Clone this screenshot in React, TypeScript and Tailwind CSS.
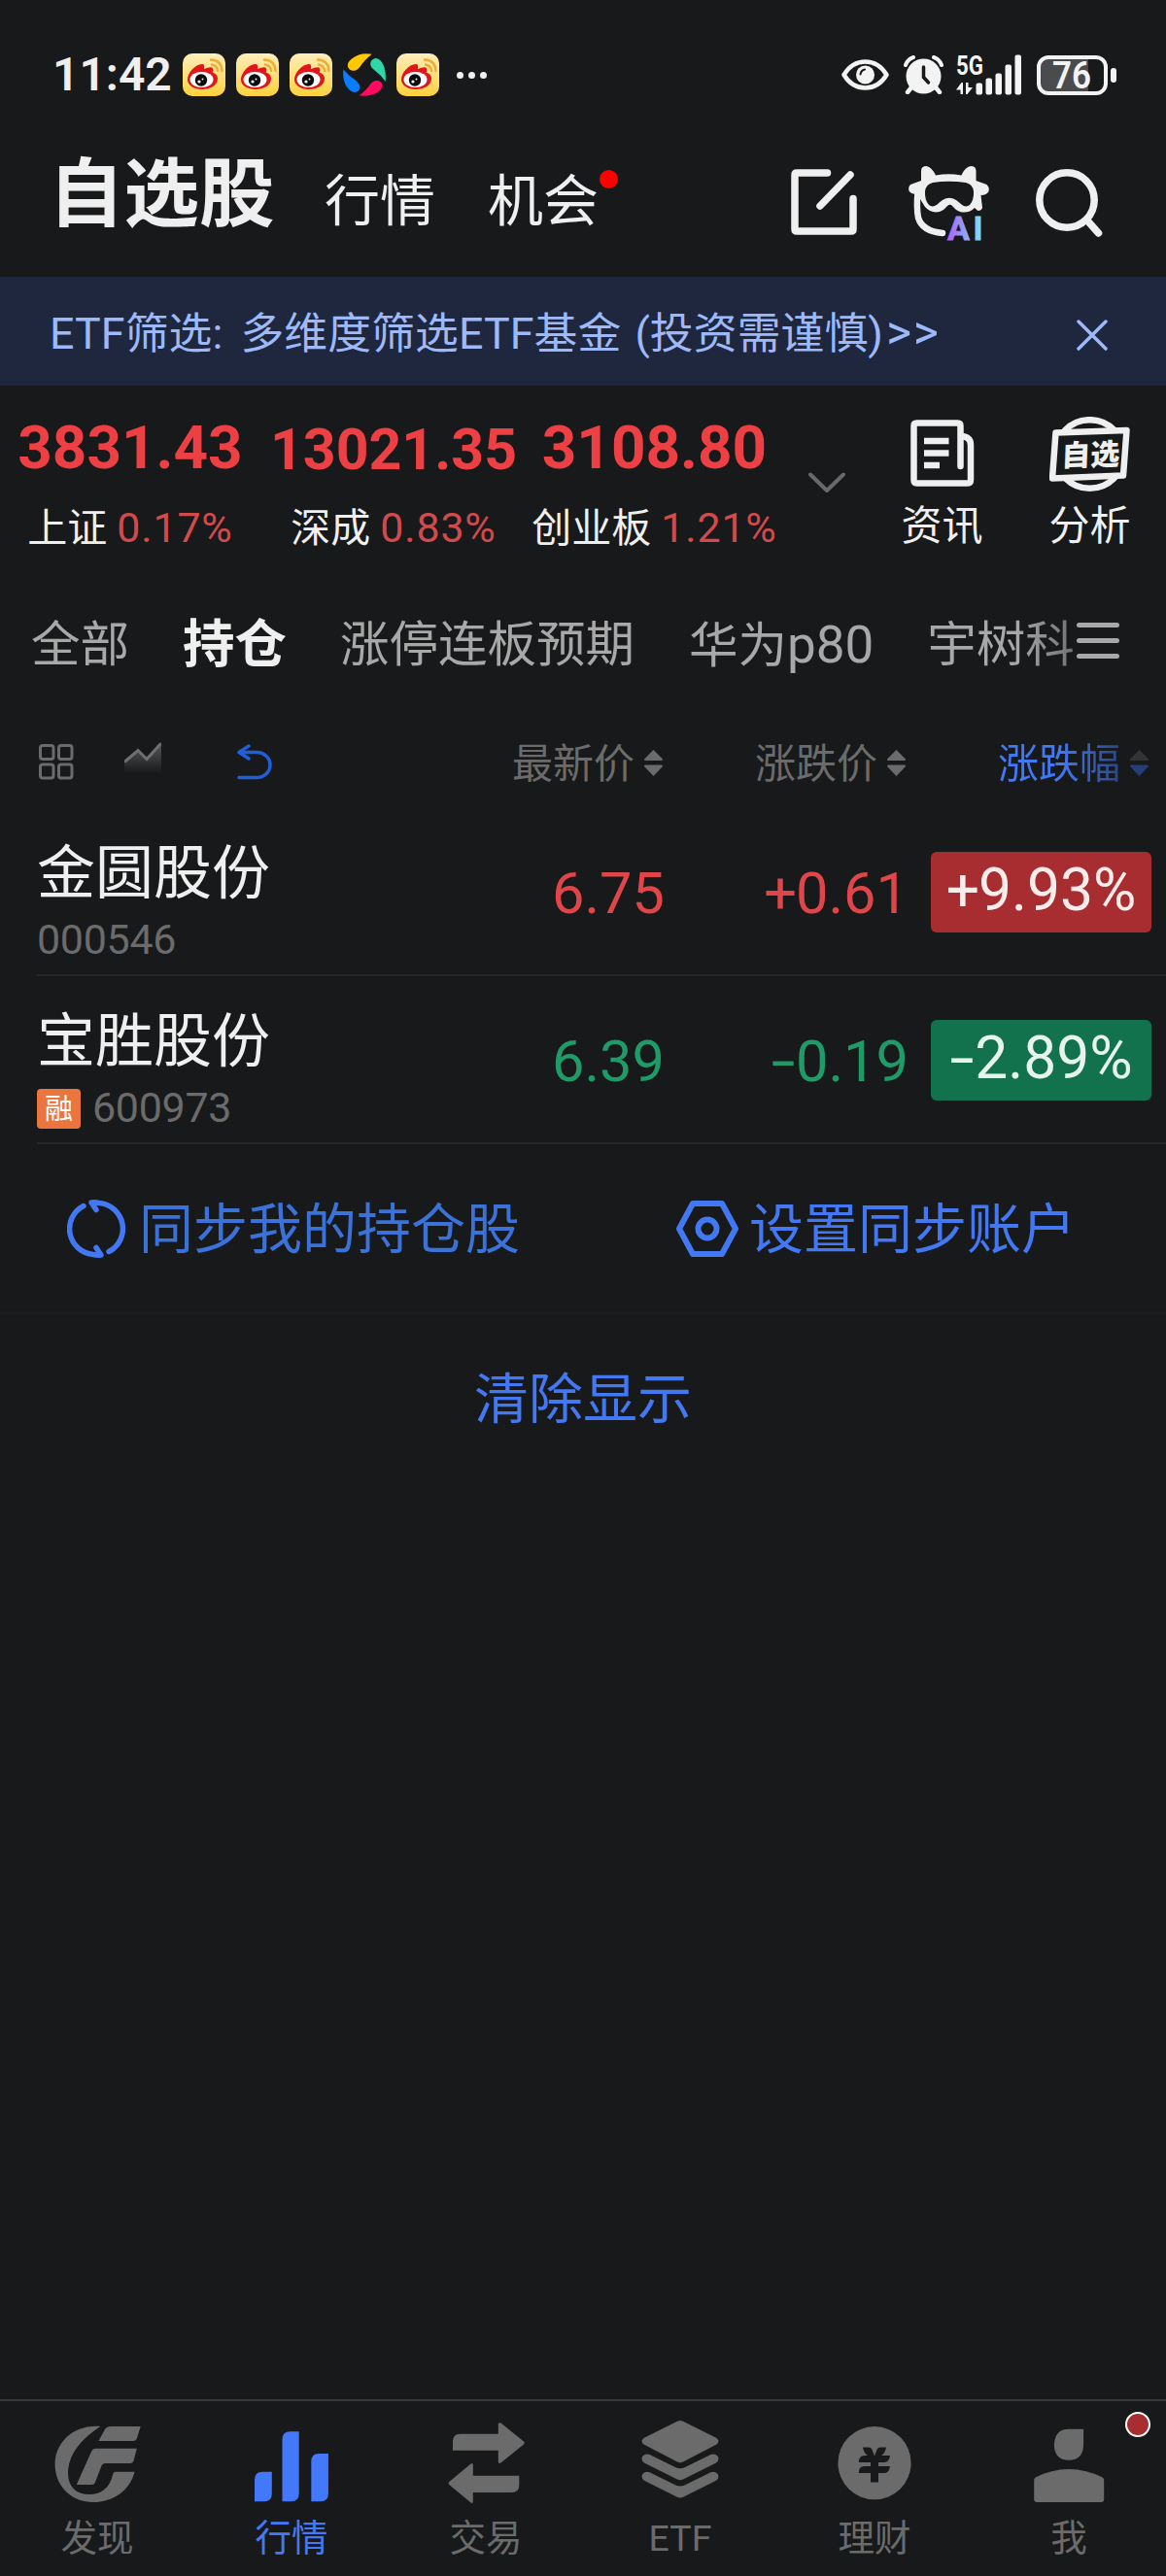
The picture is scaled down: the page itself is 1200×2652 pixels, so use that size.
import type { ReactNode } from "react"
import clsx from "clsx"

interface IndexQuote {
  value: string
  name: string
  change: string
  width: string
  small?: boolean
}

interface Stock {
  name: string
  code: string
  price: string
  change: string
  percent: string
  margin?: boolean
}

const indices: IndexQuote[] = [
  { value: "3831.43", name: "上证", change: "0.17%", width: "w-[268px]" },
  { value: "13021.35", name: "深成", change: "0.83%", width: "w-[274px]", small: true },
  { value: "3108.80", name: "创业板", change: "1.21%", width: "w-[263px]" },
]

const stocks: Stock[] = [
  { name: "金圆股份", code: "000546", price: "6.75", change: "+0.61", percent: "+9.93%" },
  { name: "宝胜股份", code: "600973", price: "6.39", change: "-0.19", percent: "-2.89%", margin: true },
]

export default function App() {
  return (
    <div className="w-[1200px] h-[2652px] flex flex-col overflow-hidden bg-[#17191a] text-[#efefef] whitespace-nowrap font-[Roboto,'Noto_Sans_CJK_SC',sans-serif]">
      <StatusBar />
      <Header />
      <Banner />
      <IndexStrip />
      <GroupTabs />
      <ColumnHeader />
      {stocks.map((stock) => (
        <StockRow key={stock.code} stock={stock} />
      ))}

      {/* Account sync actions */}
      <div className="h-[175px] shrink-0 flex items-center border-b-2 border-[#1b1b22] text-[56px] leading-[60px]">
        <div className="w-[627px] ml-[69px] flex items-center gap-[14px] text-[#3a72da]">
          <SyncIcon />
          <span className="mt-[3px]">同步我的持仓股</span>
        </div>
        <div className="flex items-center gap-[11px] text-[#4378f5]">
          <HexIcon />
          <span className="mt-[3px]">设置同步账户</span>
        </div>
      </div>
      <div className="mt-[58px] text-center text-[56px] leading-[60px] text-[#4378f5]">清除显示</div>

      <BottomNav />
    </div>
  )
}

function StatusBar() {
  return (
    <div className="h-[154px] shrink-0 flex items-center pl-[54px] pr-[51px]">
      <span className="w-[134px] text-[48px] leading-[56px] font-semibold">11:42</span>
      <div className="flex gap-[11px]">
        <WeiboIcon />
        <WeiboIcon />
        <WeiboIcon />
        <PinwheelIcon />
        <WeiboIcon />
      </div>
      <div className="ml-[18px] flex gap-[5px]">
        <i className="size-[7px] rounded-full bg-[#efefef]" />
        <i className="size-[7px] rounded-full bg-[#efefef]" />
        <i className="size-[7px] rounded-full bg-[#efefef]" />
      </div>

      <div className="ml-auto flex items-center">
        <svg width="49" height="32" viewBox="0 0 49 32" fill="none">
          <path d="M2.5 16C8 7 15 2.5 24.500 2.500S41 7 46.500 16C41 25 34 29.500 24.500 29.500S8 25 2.500 16Z" stroke="#f3f3f3" strokeWidth="4.500" strokeLinejoin="round" />
          <circle cx="24.500" cy="16" r="9.500" fill="#f3f3f3" />
          <path d="M19.500 15.500q.5-4 4.500-5" stroke="#17191a" strokeWidth="2" strokeLinecap="round" />
        </svg>
        <svg className="ml-[15px]" width="41" height="40" viewBox="0 0 41 40" fill="none">
          <circle cx="20.500" cy="21.500" r="18" fill="#f3f3f3" />
          <path d="M2 10Q4 4 10 2M39 10Q37 4 31 2" stroke="#f3f3f3" strokeWidth="4" strokeLinecap="round" />
          <path d="M8 33l-4 5M33 33l4 5" stroke="#f3f3f3" strokeWidth="4.500" strokeLinecap="round" />
          <path d="M20.500 12v10.500l5 5.500" stroke="#17191a" strokeWidth="3.500" strokeLinecap="round" />
        </svg>
        <svg className="ml-[13px] overflow-visible" width="68" height="42" viewBox="0 0 68 42" fill="#f3f3f3">
          <text x="0" y="20.500" fontSize="28" fontWeight="700" textLength="28" lengthAdjust="spacingAndGlyphs">5G</text>
          <path d="M0 36.500 5.500 29H7v12H4.500v-4.500ZM17 34l-5.500 7H10V29h2.500v5Z" />
          <rect x="20.500" y="29.500" width="6.500" height="12" rx="2" />
          <rect x="30.500" y="24.500" width="6.500" height="17" rx="2" />
          <rect x="40.500" y="19.500" width="6.500" height="22" rx="2" />
          <rect x="50.500" y="10.500" width="6.500" height="31" rx="2" />
          <rect x="60.500" y=".5" width="6.500" height="41" rx="2" />
        </svg>
        <svg className="ml-[15px] overflow-visible" width="82" height="41" viewBox="0 0 82 41">
          <path d="M12 3H53V38H12Q3 38 3 29V12Q3 3 12 3Z" fill="#4a4b4d" />
          <rect x="2" y="2" width="69" height="37" rx="10" fill="none" stroke="#f3f3f3" strokeWidth="4" />
          <rect x="76" y="13" width="6" height="15" rx="3" fill="#f3f3f3" />
          <text x="16" y="34" fontSize="38" fontWeight="600" textLength="40" lengthAdjust="spacingAndGlyphs" fill="#f3f3f3">76</text>
        </svg>
      </div>
    </div>
  )
}

function Header() {
  return (
    <div className="h-[131px] shrink-0 flex items-start pl-[50px] pr-[65px]">
      <div className="mt-[9px] flex items-baseline leading-[76px]">
        <h1 className="w-[232px] text-[77.5px] font-bold">自选股</h1>
        <span className="ml-[52px] text-[57px]">行情</span>
        <span className="relative ml-[54px] text-[57px]">
          机会
          <i className="absolute left-[115px] top-[5px] size-[19px] rounded-full bg-[#fe0000]" />
        </span>
      </div>
      <div className="ml-auto mt-[17px] flex items-start">
        <svg className="mt-[3px]" width="68" height="68" viewBox="0 0 68 68" fill="none" stroke="#efefef" strokeWidth="7.500" strokeLinecap="round" strokeLinejoin="round">
          <path d="M37.500 4H6Q4 4 4 6V62Q4 64 6 64H62Q64 64 64 62V30.500" />
          <path d="M61 6 30 38" />
        </svg>
        <RobotIcon />
        <svg className="ml-[48px] mt-[3px]" width="69" height="70" viewBox="0 0 69 70" fill="none" stroke="#efefef" strokeWidth="7.500">
          <circle cx="32" cy="32" r="28.200" />
          <path d="M53 53 64.500 66" strokeLinecap="round" />
        </svg>
      </div>
    </div>
  )
}

function Banner() {
  return (
    <div className="h-[112px] shrink-0 flex items-center justify-between pl-[51px] pr-[60px] bg-[#1e273d] text-[#9db9f9]">
      <span className="mt-1 text-[44.8px] leading-[60px] tracking-[0.1px]">
        ETF筛选:<span className="ml-[18px]">多维度筛选ETF基金</span>
        <span className="ml-[14px]">(投资需谨慎)</span>
        <span className="ml-[3px] text-[50px] tracking-[1.5px]">&gt;&gt;</span>
      </span>
      <svg className="mt-2" width="32" height="32" viewBox="0 0 32 32" fill="none" stroke="currentColor" strokeWidth="3.500" strokeLinecap="round">
        <path d="M2 2l28 28M30 2 2 30" />
      </svg>
    </div>
  )
}

function IndexStrip() {
  return (
    <div className="h-[193px] shrink-0 flex">
      {indices.map((item) => (
        <div key={item.name} className={clsx("shrink-0 pt-[31px] flex flex-col items-center", item.width)}>
          <span className={clsx("font-bold leading-[64px] text-[#ec4044]", item.small ? "text-[59px] pt-[3px] -mb-[3px]" : "text-[62px] pt-px -mb-px")}>{item.value}</span>
          <span className="mt-[27px] flex items-baseline gap-[10px] text-[41px] leading-[48px]">
            {item.name}
            <span className="text-[43px] tracking-[0.8px] text-[#d14a4c]">{item.change}</span>
          </span>
        </div>
      ))}
      <div className="w-[91px] flex justify-center pt-[89px]">
        <svg width="38" height="22" viewBox="0 0 38 22" fill="none" stroke="#69696a" strokeWidth="4" strokeLinecap="round" strokeLinejoin="round">
          <path d="M2 2.500 19 19 36 2.500" />
        </svg>
      </div>
      <div className="w-[147px] pt-[32px] flex flex-col items-center">
        <svg className="mt-[3px]" width="66" height="70" viewBox="0 0 66 70" fill="none" stroke="#efefef" strokeWidth="6.500" strokeLinecap="round" strokeLinejoin="round">
          <path d="M51.500 48V6.500q0-3-3-3H6.500q-3 0-3 3V62q0 3.500 3 3.500H59q3 0 3-3.500V26q0-8.500-10-9" />
          <path d="M14 22h25.500M14 34.500h25.500M14 47h16" strokeLinecap="butt" />
        </svg>
        <span className="mt-[16px] text-[42px] leading-[48px]">资讯</span>
      </div>
      <div className="w-[157px] pt-[32px] flex flex-col items-center">
        <svg width="84" height="78" viewBox="0 0 84 78" fill="none" stroke="#efefef">
          <circle cx="41.500" cy="38.500" r="35.300" strokeWidth="6.500" />
          <path d="M6.500 16.500 79.500 14 76 60.500 3 63.500Z" strokeWidth="6.500" strokeLinejoin="round" fill="#17191a" />
          <text transform="translate(12 51) rotate(-2) skewX(-4)" fontSize="30" fontWeight="800" fill="#efefef" stroke="none">自选</text>
        </svg>
        <span className="mt-[11px] text-[42px] leading-[48px]">分析</span>
      </div>
    </div>
  )
}

function GroupTabs() {
  return (
    <div className="h-[140px] shrink-0 flex items-center pl-[32px] pt-2 text-[50.5px] leading-[60px] text-[#a8a8a8]">
      <span>全部</span>
      <span className="ml-[55px] text-[53.5px] font-bold text-[#efefef]">持仓</span>
      <span className="ml-[55px]">涨停连板预期</span>
      <span className="ml-[56px]">华为<span className="text-[53px]">p80</span></span>
      <span className="ml-[55px] w-[154px] overflow-hidden bg-linear-to-r from-[#a8a8a8] from-60% to-[#707070] bg-clip-text text-transparent">宇树科</span>
      <div className="-mt-[10px] flex flex-col gap-[11px]">
        <i className="w-[44px] h-[5px] rounded-full bg-[#a8a8a8]" />
        <i className="w-[44px] h-[5px] rounded-full bg-[#a8a8a8]" />
        <i className="w-[44px] h-[5px] rounded-full bg-[#a8a8a8]" />
      </div>
    </div>
  )
}

function ColumnHeader() {
  return (
    <div className="h-[102px] shrink-0 flex items-center pt-[12px] pl-[40px] text-[42px] leading-[48px] text-[#6b6b6b]">
      <svg className="mb-1.5" width="36" height="37" viewBox="0 0 36 37" fill="none" stroke="#6b6b6b" strokeWidth="3">
        <rect x="1.500" y="1.500" width="13.500" height="14" rx="2.500" />
        <rect x="20.500" y="1.500" width="13.500" height="14" rx="2.500" />
        <rect x="1.500" y="21" width="13.500" height="14" rx="2.500" />
        <rect x="20.500" y="21" width="13.500" height="14" rx="2.500" />
      </svg>
      <svg className="ml-[52px] mb-2.5" width="38" height="36" viewBox="0 0 38 36" fill="none">
        <defs>
          <linearGradient id="area" x1="0" y1="0" x2="0" y2="1">
            <stop offset="0" stopColor="#5a5b5c" />
            <stop offset="1" stopColor="#17191a" />
          </linearGradient>
        </defs>
        <path d="M0 20 14 8 23 17 38 0V32H0Z" fill="url(#area)" />
        <path d="M0 20.500 14 8.500 23 17.500 37.500 1.500" stroke="#6f6f6f" strokeWidth="3" />
      </svg>
      <svg className="ml-[78px] mb-1.5" width="37" height="37" viewBox="0 0 37 37" fill="none" stroke="#1f5fdc" strokeWidth="3.500" strokeLinecap="round" strokeLinejoin="round">
        <path d="M12 2 2 8.500l10 6.500M3 8.500H20a14 13 0 0 1 0 26H2" />
      </svg>
      <div className="w-[401px] flex items-center justify-end gap-[10px]">
        最新价
        <SortMark />
      </div>
      <div className="w-[250px] flex items-center justify-end gap-[10px]">
        涨跌价
        <SortMark />
      </div>
      <div className="w-[250px] flex items-center justify-end gap-[10px]">
        <span className="bg-linear-to-r from-[#4378f5] from-50% to-[#2b4684] bg-clip-text text-transparent">涨跌幅</span>
        <SortMark up="#333435" down="#263e76" />
      </div>
    </div>
  )
}

function SortMark({ up = "#6b6b6b", down = "#6b6b6b" }: { up?: string; down?: string }) {
  return (
    <svg className="mb-1" width="19" height="27" viewBox="0 0 19 27">
      <path d="M9.500 0 19 9.500Q19 11 18 11H1Q0 11 0 9.500Z" fill={up} />
      <path d="M9.500 27 19 17Q19 15.500 18 15.500H1Q0 15.500 0 17Z" fill={down} />
    </svg>
  )
}

function StockRow({ stock }: { stock: Stock }) {
  const isDown = stock.change.startsWith("-")
  return (
    <div className="h-[173px] shrink-0 ml-[38px] flex border-b-2 border-[#26272a]">
      <div className="w-[397px] pt-[32px]">
        <div className="text-[60px] leading-[72px]">{stock.name}</div>
        <div className={clsx("flex items-center text-[43px] leading-[40px] tracking-[-0.3px] text-[#6b6b6b]", stock.margin ? "mt-[12px]" : "mt-[11px]")}>
          {stock.margin && (
            <span className="mr-[12px] w-[45px] h-[41px] rounded-[4px] bg-[#ea753f] text-center text-[29px] leading-[42px] tracking-normal text-white">融</span>
          )}
          <span className={clsx(stock.margin && "-mt-[4px]")}>{stock.code}</span>
        </div>
      </div>
      <div className={clsx("flex h-[83px] mt-[45px] text-[59.5px] leading-[87px]", isDown ? "text-[#1f9b69]" : "text-[#e04649]")}>
        <span className="w-[249px] text-right">{stock.price}</span>
        <span className="w-[251px] text-right">
          <Signed value={stock.change} />
        </span>
        <span
          className={clsx(
            "ml-[23px] w-[227px] h-[83px] rounded-[6px] text-center text-[60.5px] leading-[79px]",
            isDown ? "bg-[#12724d] text-[#e6f3ee]" : "bg-[#a82d30] text-[#fbecec]",
          )}
        >
          <Signed value={stock.percent} />
        </span>
      </div>
    </div>
  )
}

// Roboto's hyphen is too short for a minus sign, so it is stretched
function Signed({ value }: { value: string }) {
  if (!value.startsWith("-")) {
    return (
      <>
        <span className="tracking-[-1px]">+</span>
        {value.slice(1)}
      </>
    )
  }
  return (
    <>
      <span className="inline-block w-[26px] text-center scale-x-150">-</span>
      {value.slice(1)}
    </>
  )
}

function BottomNav() {
  return (
    <div className="mt-auto h-[182px] shrink-0 flex border-t-2 border-[#37383b] text-[#6b6b6b]">
      <NavItem label="发现">
        <path d="M53.300 8C24 6 6.600 26 6.600 47C6.600 70 24 86 46 86C66 86 84 74 88.500 54.700H69q-2.500 0-3 3C63 72 53 78 42 78C28 78 20 70 20 56C20 38 32 22 53.300 8Z" />
        <path d="M64 8H94.700L91 20q-1 3-4 3H51.400L58 11q2-3 6-3ZM49 30.700H90.800L87.500 43.500q-1 2.500-3.500 2.500H58q-2.500 0-3.500 2.500L48 65.500q-1 2.500-3.500 2.500H28.800L44 34q1.500-3.300 5-3.300Z" />
      </NavItem>
      <NavItem label="行情" active>
        <path d="M12 85.300V63q0-8.300 8-8.300h9.800V77q0 8.300-8 8.300ZM40.500 85.300V21.500q0-8.300 8-8.300h9.200V77q0 8.300-8 8.300ZM70.300 85.300V44.300q0-8.300 8-8.300h9.600V77q0 8.300-8 8.300Z" />
      </NavItem>
      <NavItem label="交易">
        <path d="M16 32.700V23.500q0-7.800 7.500-7.800H62.800V6q0-3 3-1.200L89 23.500q1.500 1.500 0 3L65.800 45.200q-3 1.800-3-1.200V32.700ZM84.300 58.700V68q0 8-7.500 8H36.800v9.500q0 2.500-2.500.8L12.300 68q-1.500-1.500 0-3L34.300 46.700q2.500-1.700 2.500.8V58.700Z" />
      </NavItem>
      <NavItem label="ETF">
        <path d="M47 2.800q3-1.500 6 0L87.500 20q4 3.300 0 6.600L53 44.500q-3 1.500-6 0L12.500 26.600q-4-3.300 0-6.600Z" />
        <path d="M11.500 38.500q3-3 7-1.500L46 50.500q4 1.500 8 0L81.500 37q4-1.500 7 1.500 2.500 4-1.500 7L53 62.500q-3 1.500-6 0L13 45.500q-4-3-1.500-7ZM11.500 56.800q3-3 7-1.500L46 68.800q4 1.500 8 0L81.500 55.300q4-1.500 7 1.500 2.500 4-1.500 7L53 80.800q-3 1.500-6 0L13 63.800q-4-3-1.500-7Z" />
      </NavItem>
      <NavItem label="理财">
        <circle cx="50" cy="45.700" r="37.600" />
        <path d="M38 29.500h6q3 0 4 4l2 5 2-5q1-4 4-4h6q-1 6-5 8.500h9q-1 7-6 7h-6v4h12q-1 7-6 7h-6v9.500h-8V56H33.800q0-7 6-7H46v-4H33.800q0-7 6-7H43Q39 35.500 38 29.500Z" fill="#17191a" />
      </NavItem>
      <NavItem label="我" badge>
        <path d="M50 10.700H65.100V27q-.5 15.700-15.100 15.700T34.900 27Q35.500 10.700 50 10.700ZM14.200 63q0-1.500 1.500-2.500Q32 52 50 52T84.700 60.500q1.500 1 1.500 2.500V83q0 3-3 3H17.200q-3 0-3-3Z" />
      </NavItem>
    </div>
  )
}

function NavItem({ label, active, badge, children }: { label: string; active?: boolean; badge?: boolean; children: ReactNode }) {
  return (
    <div className={clsx("relative flex-1 pt-[18px] flex flex-col items-center", active && "text-[#4378fb]")}>
      <svg width="100" height="90" viewBox="0 0 100 90" fill="currentColor">
        {children}
      </svg>
      <span className="mt-[11px] text-[37.5px] leading-[44px]">{label}</span>
      {badge && <i className="absolute left-[158px] top-[11px] size-[26px] rounded-full border-2 border-white bg-[#a82d30]" />}
    </div>
  )
}

function WeiboIcon() {
  return (
    <svg width="44" height="44" viewBox="0 0 44 44" fill="none">
      <defs>
        <linearGradient id="weibo" x1="0" y1="0" x2="0" y2="1">
          <stop offset="0" stopColor="#fdeebb" />
          <stop offset="1" stopColor="#ffd23c" />
        </linearGradient>
      </defs>
      <rect width="44" height="44" rx="10" fill="url(#weibo)" />
      <path d="M5 27C5 20 13 11 20 11q3 0 2 5 8-3 9-.5 1 2-.5 4Q36 21 36 26C36 33 28 37 20 37S5 33 5 27Z" fill="#e3141c" />
      <ellipse cx="19.500" cy="27" rx="12" ry="8" fill="#fff" />
      <circle cx="19" cy="27.500" r="6.200" fill="#0c0c0c" />
      <circle cx="17" cy="29" r="1.600" fill="#fff" />
      <circle cx="20.500" cy="26.500" r=".9" fill="#fff" />
      <path d="M29 6.500Q40 7 40.500 18M30 11.500q5.500 1 6 6.500" stroke="#f0ab35" strokeWidth="2.400" strokeLinecap="round" />
    </svg>
  )
}

function PinwheelIcon() {
  return (
    <svg width="44" height="44" viewBox="0 0 44 44">
      <path d="M29.700.8Q18-1.500 9 5.500 4 9.500 5 13.500q1.500 4.500 6 4.300 4-.3 7-4.800Q22 7 29.700.8Z" fill="#ffc800" />
      <path d="M43.600 29Q45 16 39.500 8.500 36.500 4.500 33 5q-5 1.500-4.800 6 0 3 4.500 6.500Q39 22 43.600 29Z" fill="#2fd6a8" />
      <path d="M16.500 43.300Q27 45 35.500 40q5-3.500 5-7.500-1-4.500-6-4.500-4 0-7 4.500Q24 38 16.500 43.300Z" fill="#ff0a62" />
      <path d="M.5 16.500Q-1 27 4 34.500q4 5.500 8.500 5.500 5-1 5-5 0-3-4-7Q6 23.500.5 16.500Z" fill="#0a7dff" />
    </svg>
  )
}

function RobotIcon() {
  return (
    <svg className="ml-[53px] overflow-visible" width="83" height="78" viewBox="0 0 83 78" fill="none">
      <defs>
        <linearGradient id="ai" x1="0" y1="0" x2="1" y2="0">
          <stop offset="0" stopColor="#b062f5" />
          <stop offset=".55" stopColor="#8fa8fa" />
          <stop offset="1" stopColor="#7ce6f8" />
        </linearGradient>
      </defs>
      <path d="M13 15V5q0-5 5.500-5Q24 1 28 9.500 41 7 54.500 9.500 58 1 64 0 69.500 0 69.500 5v10l11 4q3 3 2 7-2 4-8 4L76 43q-1 3-4.500 3L68 43q-6 6-15 4-5-2-8-6-2-2.500-5 0-3 4-8 6-9 2-15-5L9 29Q3 29 .800 26-1 22 2 19Z" fill="#efefef" />
      <path d="M25 17Q41 14.500 59 17q7 1.500 8 9 .5 9-4 14-4 3-8.500-.5-3-3-5.500-4.500-7-4.500-14 0-3 2-5.500 4.500-5 3.500-8.500.5-4.500-5-4-14 1-7.500 8-9Z" fill="#17191a" />
      <path d="M9.500 27Q8 42 10 53q4 14 25 16" stroke="#efefef" strokeWidth="6.500" strokeLinecap="round" />
      <text x="40 66.5" y="76" fontSize="34" fontWeight="700" fill="url(#ai)" stroke="url(#ai)" strokeWidth="0.8">AI</text>
    </svg>
  )
}

function SyncIcon() {
  return (
    <svg width="60" height="60" viewBox="0 0 60 60" fill="none" stroke="#4378f5" strokeWidth="5.500" strokeLinecap="round" strokeLinejoin="round">
      <path d="M17 6.500A26.500 26.500 0 0 0 27 56.500q4 1 8 .5L30 49.500M43 53.500A26.500 26.500 0 0 0 33 3.500q-4-1-8-.5L30 10.500" />
    </svg>
  )
}

function HexIcon() {
  return (
    <svg width="64" height="60" viewBox="0 0 64 60" fill="none" stroke="currentColor" strokeWidth="6" strokeLinejoin="round">
      <path d="M17 4H47L61 30 47 56H17L3 30Z" />
      <circle cx="32" cy="30" r="9.500" />
    </svg>
  )
}
